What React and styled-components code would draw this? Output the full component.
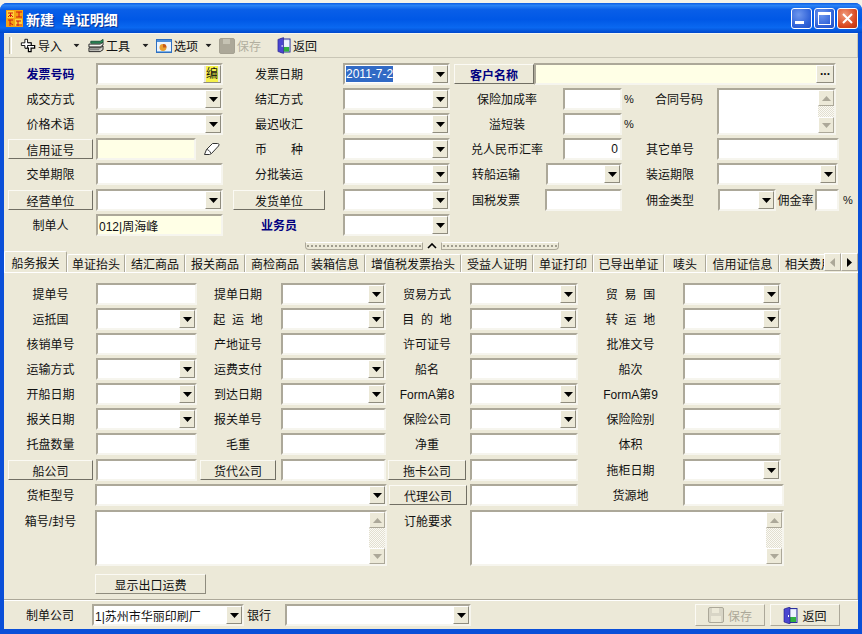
import React from "react";
import styled, { createGlobalStyle } from "styled-components";

const GlobalStyle = createGlobalStyle`
  html, body {
    margin: 0;
    padding: 0;
    background: #f4f2e8;
    overflow: hidden;
  }
  * {
    box-sizing: border-box;
  }
`;

const TOP_TABS = [
  { name: "单证抬头", w: 58 },
  { name: "结汇商品", w: 60 },
  { name: "报关商品", w: 60 },
  { name: "商检商品", w: 60 },
  { name: "装箱信息", w: 60 },
  { name: "增值税发票抬头", w: 96 },
  { name: "受益人证明", w: 72 },
  { name: "单证打印", w: 60 },
  { name: "已导出单证", w: 71 },
  { name: "唛头", w: 42 },
  { name: "信用证信息", w: 73 },
  { name: "相关费用", w: 60 }
];

const Arrow = ({ dir = "down", color = "#000" }) => {
  const points = {
    down: "0,0 9,0 4.5,5",
    up: "0,5 9,5 4.5,0",
    left: "5,0 5,9 0,4.5",
    right: "0,0 0,9 5,4.5"
  };
  const vertical = dir === "up" || dir === "down";
  return (
    <svg width={vertical ? 9 : 5} height={vertical ? 5 : 9}>
      <polygon points={points[dir]} fill={color} />
    </svg>
  );
};

const Combo = ({ w, ml, mt, children }) => (
  <Field $w={w} $ml={ml} $mt={mt}>
    <FieldText>{children}</FieldText>
    <DropButton>
      <Arrow />
    </DropButton>
  </Field>
);

const Memo = ({ w, h, ml }) => (
  <MemoBox $w={w} $h={h} $ml={ml}>
    <ScrollBar>
      <ScrollButton>
        <Arrow dir="up" color="#aca899" />
      </ScrollButton>
      <ScrollButton>
        <Arrow color="#aca899" />
      </ScrollButton>
    </ScrollBar>
  </MemoBox>
);

const LogoIcon = () => (
  <svg width="17" height="17" viewBox="0 0 17 17">
    <rect width="17" height="17" fill="#f5a214" />
    <rect x="1" y="1" width="7" height="7" fill="#ffd23c" />
    <rect x="9" y="9" width="7" height="7" fill="#ffd23c" />
    <path
      d="M2 3h5M4.500 3v4M2 7l2-2M7 7L5 5M10 2h6M13 2v5M10 7h6M2 10h5M4 10v6M4 13l3 2M10 11h5M12 11v5M10 15h6"
      stroke="#d01810"
      strokeWidth="1"
      fill="none"
    />
  </svg>
);

const ImportIcon = () => (
  <svg width="18" height="17" viewBox="0 0 18 17">
    <path
      d="M9.500 5.500h3v3h4v3h-4v4h-3v-4h-3v-3h3z"
      fill="#fff"
      stroke="#000"
      strokeWidth="1.400"
    />
    <path
      d="M5.500 1.500h3v4h4v3h-4v3h-3v-3h-4v-3h4z"
      fill="#fff"
      stroke="#000"
    />
  </svg>
);

const ToolsIcon = () => (
  <svg width="17" height="17" viewBox="0 0 17 17">
    <path d="M1 11h12l3-2v4l-3 2H1z" fill="#cfcfc8" stroke="#222" />
    <path d="M1 7h12l3-2v3l-3 2H1z" fill="#f4f4f0" stroke="#222" />
    <path d="M3 4h10l3-2v3l-3 1H3z" fill="#2f9a5c" stroke="#17503a" />
    <path d="M2 13h10" stroke="#666" />
  </svg>
);

const OptionsIcon = () => (
  <svg width="16" height="14" viewBox="0 0 16 14">
    <rect x="0.500" y="0.500" width="15" height="13" fill="#eef4fb" stroke="#2d6fc2" />
    <rect x="1" y="1" width="14" height="2" fill="#4d8ed8" />
    <circle cx="7" cy="8.500" r="3.500" fill="#e8a030" />
    <path d="M7 8.500V5a3.500 3.500 0 0 1 3.500 3.500z" fill="#c85a18" />
    <rect x="1" y="12" width="14" height="1" fill="#7db0e4" />
  </svg>
);

const SaveIcon = ({ light }) => (
  <svg width="16" height="16" viewBox="0 0 16 16">
    <rect
      x="0.500"
      y="0.500"
      width="15"
      height="15"
      rx="1.500"
      fill={light ? "#d8d5c6" : "#aca899"}
      stroke={light ? "#aca899" : "#a5a192"}
    />
    <rect x="4" y="1" width="7" height="5" fill={light ? "#ece9d8" : "#c6c3b4"} />
    <rect x="3" y="9" width="10" height="6" fill={light ? "#ece9d8" : "#aca899"} />
  </svg>
);

const DoorIcon = () => (
  <svg width="15" height="17" viewBox="0 0 15 17">
    <rect x="4" y="1.500" width="10" height="14" fill="#d4dcf4" stroke="#2a2f9c" />
    <rect x="7" y="10" width="6" height="5" fill="#30b040" />
    <rect x="7" y="3" width="6" height="7" fill="#eef3ff" />
    <path d="M1 2l6-2v17l-6-2z" fill="#4a46d0" stroke="#1d1a80" strokeWidth="0.600" />
    <rect x="5" y="8" width="1" height="2" fill="#fff" />
  </svg>
);

const EraserIcon = () => (
  <svg width="17" height="14" viewBox="0 0 17 14">
    <path
      d="M1.500 12.500l2-5 6-6h5c1.500 0 2 1 1 2.500l-7 7.500-2 1z"
      fill="#fff"
      stroke="#333"
    />
    <path d="M3.500 7.500c1.500 0 3 1 4.500 4" fill="none" stroke="#333" />
  </svg>
);

const App = () => (
  <>
    <GlobalStyle />
    <Window>
      <TitleBar>
        <LogoIcon />
        <TitleText>{"新建  单证明细"}</TitleText>
        <WindowButtons>
          <WindowButton>
            <MinGlyph />
          </WindowButton>
          <WindowButton>
            <MaxGlyph />
          </WindowButton>
          <WindowButton $close>
            <svg width="11" height="11">
              <path d="M1 1l9 9M10 1l-9 9" stroke="#fff" strokeWidth="2" />
            </svg>
          </WindowButton>
        </WindowButtons>
      </TitleBar>

      <Body>
        <Toolbar>
          <Grip />
          <ToolItem $ml={8} $w={42}>
            <ImportIcon />
            导入
          </ToolItem>
          <Caret $ml={10}>
            <Arrow color="#222" />
          </Caret>
          <ToolItem $ml={7} $w={42}>
            <ToolsIcon />
            工具
          </ToolItem>
          <Caret $ml={11}>
            <Arrow color="#222" />
          </Caret>
          <ToolItem $ml={6} $w={42}>
            <OptionsIcon />
            选项
          </ToolItem>
          <Caret $ml={6}>
            <Arrow color="#222" />
          </Caret>
          <ToolItem $ml={6} $w={42} $disabled>
            <SaveIcon />
            保存
          </ToolItem>
          <ToolItem $ml={16} $w={40}>
            <DoorIcon />
            返回
          </ToolItem>
        </Toolbar>

        <TopForm>
          <Row>
            <Label $w={85} $strong>发票号码</Label>
            <Field $w={127} $ml={3}>
              <FieldText />
              <CodeButton>
                <CodeMark>编</CodeMark>
              </CodeButton>
            </Field>
            <Label $w={92} $ml={10}>发票日期</Label>
            <Field $w={107} $ml={18}>
              <FieldText>
                <Selected>2011-7-2</Selected>
              </FieldText>
              <DropButton>
                <Arrow />
              </DropButton>
            </Field>
            <PushButton $w={80} $ml={4} $strong>客户名称</PushButton>
            <Field $w={302} $tint>
              <FieldText />
              <DotsButton>...</DotsButton>
            </Field>
          </Row>

          <RowGroup>
            <RowStack>
              <Row>
                <Label $w={85}>成交方式</Label>
                <Combo w={127} ml={3} />
                <Label $w={92} $ml={10}>结汇方式</Label>
                <Combo w={107} ml={18} />
                <Label $w={106} $ml={4}>保险加成率</Label>
                <Field $w={59} $ml={3} />
                <Unit $ml={2}>%</Unit>
                <Label $w={74} $ml={8}>合同号码</Label>
              </Row>
              <Row>
                <Label $w={85}>价格术语</Label>
                <Combo w={127} ml={3} />
                <Label $w={92} $ml={10}>最迟收汇</Label>
                <Combo w={107} ml={18} />
                <Label $w={106} $ml={4}>溢短装</Label>
                <Field $w={59} $ml={3} />
                <Unit $ml={2}>%</Unit>
              </Row>
            </RowStack>
            <Memo w={119} h={47} ml={3} />
          </RowGroup>

          <Row>
            <PushButton $w={85}>信用证号</PushButton>
            <Field $w={100} $ml={3} $tint />
            <IconSlot $ml={7}>
              <EraserIcon />
            </IconSlot>
            <Label $w={92} $ml={13}>币　　种</Label>
            <Combo w={107} ml={18} />
            <Label $w={106} $ml={4}>兑人民币汇率</Label>
            <Field $w={59} $ml={3} $right>
              <FieldText>0</FieldText>
            </Field>
            <Label $w={60} $ml={18}>其它单号</Label>
            <Field $w={122} $ml={17} />
          </Row>

          <Row>
            <Label $w={85}>交单期限</Label>
            <Field $w={127} $ml={3} />
            <Label $w={92} $ml={10}>分批装运</Label>
            <Combo w={107} ml={18} />
            <Label $w={84} $ml={4}>转船运输</Label>
            <Combo w={76} ml={8} />
            <Label $w={60} $ml={18}>装运期限</Label>
            <Combo w={121} ml={17} />
          </Row>

          <Row $mt={1}>
            <PushButton $w={85}>经营单位</PushButton>
            <Combo w={127} ml={3} />
            <PushButton $w={92} $ml={10}>发货单位</PushButton>
            <Combo w={107} ml={18} />
            <Label $w={84} $ml={4}>国税发票</Label>
            <Field $w={77} $ml={7} />
            <Label $w={60} $ml={18}>佣金类型</Label>
            <Combo w={58} ml={18} />
            <Label $w={37} $ml={1}>佣金率</Label>
            <Field $w={24} $ml={1} />
            <Unit $ml={4}>%</Unit>
          </Row>

          <Row>
            <Label $w={85}>制单人</Label>
            <Field $w={127} $ml={3} $tint>
              <FieldText>012|周海峰</FieldText>
            </Field>
            <Label $w={92} $ml={10} $strong>业务员</Label>
            <Combo w={107} ml={18} />
          </Row>
        </TopForm>

        <Splitter>
          <GripBar />
          <SplitCaret>
            <svg width="10" height="6">
              <path d="M1 5l4-4 4 4" stroke="#000" strokeWidth="1.600" fill="none" />
            </svg>
          </SplitCaret>
          <GripBar $flip />
        </Splitter>

        <TabBar>
          <TabList>
            <Tab $w={63} $active>船务报关</Tab>
            {TOP_TABS.map(tab => (
              <Tab key={tab.name} $w={tab.w}>
                {tab.name}
              </Tab>
            ))}
          </TabList>
          <TabScroll>
            <Arrow dir="left" color="#aca899" />
          </TabScroll>
          <TabScroll>
            <Arrow dir="right" />
          </TabScroll>
        </TabBar>

        <Page>
          <Row>
            <Label $w={85}>提单号</Label>
            <Field $w={101} $ml={3} />
            <Label $w={76} $ml={3}>提单日期</Label>
            <Combo w={105} ml={5} />
            <Label $w={78} $ml={2}>贸易方式</Label>
            <Combo w={108} ml={4} />
            <Label $w={105}>{"贸  易  国"}</Label>
            <Combo w={98} />
          </Row>
          <Row>
            <Label $w={85}>运抵国</Label>
            <Combo w={101} ml={3} />
            <Label $w={76} $ml={3}>{"起  运  地"}</Label>
            <Combo w={105} ml={5} />
            <Label $w={78} $ml={2}>{"目  的  地"}</Label>
            <Combo w={108} ml={4} />
            <Label $w={105}>{"转  运  地"}</Label>
            <Combo w={98} />
          </Row>
          <Row>
            <Label $w={85}>核销单号</Label>
            <Field $w={101} $ml={3} />
            <Label $w={76} $ml={3}>产地证号</Label>
            <Field $w={105} $ml={5} />
            <Label $w={78} $ml={2}>许可证号</Label>
            <Field $w={108} $ml={4} />
            <Label $w={105}>批准文号</Label>
            <Field $w={98} />
          </Row>
          <Row>
            <Label $w={85}>运输方式</Label>
            <Combo w={101} ml={3} />
            <Label $w={76} $ml={3}>运费支付</Label>
            <Combo w={105} ml={5} />
            <Label $w={78} $ml={2}>船名</Label>
            <Field $w={108} $ml={4} />
            <Label $w={105}>船次</Label>
            <Field $w={98} />
          </Row>
          <Row>
            <Label $w={85}>开船日期</Label>
            <Combo w={101} ml={3} />
            <Label $w={76} $ml={3}>到达日期</Label>
            <Combo w={105} ml={5} />
            <Label $w={78} $ml={2}>FormA第8</Label>
            <Combo w={108} ml={4} />
            <Label $w={105}>FormA第9</Label>
            <Field $w={98} />
          </Row>
          <Row>
            <Label $w={85}>报关日期</Label>
            <Combo w={101} ml={3} />
            <Label $w={76} $ml={3}>报关单号</Label>
            <Field $w={105} $ml={5} />
            <Label $w={78} $ml={2}>保险公司</Label>
            <Combo w={108} ml={4} />
            <Label $w={105}>保险险别</Label>
            <Field $w={98} />
          </Row>
          <Row $h={26}>
            <Label $w={85}>托盘数量</Label>
            <Field $w={101} $ml={3} />
            <Label $w={76} $ml={3}>毛重</Label>
            <Field $w={105} $ml={5} />
            <Label $w={78} $ml={2}>净重</Label>
            <Field $w={108} $ml={4} />
            <Label $w={105}>体积</Label>
            <Field $w={98} />
          </Row>
          <Row>
            <PushButton $w={85}>船公司</PushButton>
            <Field $w={101} $ml={3} />
            <PushButton $w={76} $ml={3}>货代公司</PushButton>
            <Field $w={105} $ml={5} />
            <PushButton $w={78} $ml={2}>拖卡公司</PushButton>
            <Field $w={108} $ml={4} />
            <Label $w={105}>拖柜日期</Label>
            <Combo w={98} />
          </Row>
          <Row $h={26}>
            <Label $w={85}>货柜型号</Label>
            <Combo w={292} ml={2} />
            <PushButton $w={78} $ml={2}>代理公司</PushButton>
            <Field $w={108} $ml={3} />
            <Label $w={105}>货源地</Label>
            <Field $w={101} />
          </Row>
          <MemoRow>
            <Label $w={85}>箱号/封号</Label>
            <Memo w={292} h={56} ml={2} />
            <Label $w={78} $ml={2}>订舱要求</Label>
            <Memo w={314} h={56} ml={3} />
          </MemoRow>
          <FreightButton>显示出口运费</FreightButton>
        </Page>

        <Footer>
          <Label $w={84}>制单公司</Label>
          <Combo w={152}>1|苏州市华丽印刷厂</Combo>
          <Label $w={24} $ml={3}>银行</Label>
          <Combo w={186} ml={14} />
          <FooterButton $ml={224} $disabled>
            <SaveIcon light />
            保存
          </FooterButton>
          <FooterButton $ml={5}>
            <DoorIcon />
            返回
          </FooterButton>
        </Footer>
      </Body>
    </Window>
  </>
);

const Window = styled.div`
  width: 862px;
  height: 631px;
  margin-top: 3px;
  display: flex;
  flex-direction: column;
  background: #0a4fd8;
  border-radius: 7px 7px 0 0;
  overflow: hidden;
  font-family: "Liberation Sans", "Noto Sans CJK SC", sans-serif;
  font-size: 12px;
  color: #111;
`;

const TitleBar = styled.div`
  height: 30px;
  flex: none;
  display: flex;
  align-items: center;
  padding: 1px 4px 0 6px;
  background: linear-gradient(
    to bottom,
    #0a5be2 0%,
    #2a83f5 8%,
    #0a5fe8 22%,
    #0058e6 55%,
    #0a68f0 82%,
    #0048cc 100%
  );
`;

const TitleText = styled.div`
  margin-left: 3px;
  color: #fff;
  font-size: 14px;
  font-weight: 700;
  white-space: pre;
  text-shadow: 1px 1px 1px #0a2f90;
`;

const WindowButtons = styled.div`
  margin-left: auto;
  display: flex;
  gap: 2px;
`;

const WindowButton = styled.div`
  width: 21px;
  height: 21px;
  display: flex;
  align-items: center;
  justify-content: center;
  border: 1px solid #fff;
  border-radius: 3px;
  background: ${props =>
    props.$close
      ? "radial-gradient(circle at 35% 30%, #f09a7a, #d9461e 65%, #b83412)"
      : "radial-gradient(circle at 35% 30%, #6e97ee, #2f62d8 65%, #2450c4)"};
`;

const MinGlyph = styled.div`
  width: 9px;
  height: 3px;
  margin: 8px 5px 0 0;
  background: #fff;
`;

const MaxGlyph = styled.div`
  width: 13px;
  height: 13px;
  border: 1px solid #fff;
  border-top-width: 3px;
`;

const Body = styled.div`
  flex: 1;
  margin: 0 4px 5px 4px;
  min-height: 0;
  display: flex;
  flex-direction: column;
  background: #ece9d8;
`;

const Toolbar = styled.div`
  height: 25px;
  flex: none;
  display: flex;
  align-items: center;
  padding-left: 5px;
  border-top: 1px solid #f8f7f0;
  border-bottom: 1px solid #c9c6b6;
  border-right: 1px solid #c9c6b6;
`;

const Grip = styled.div`
  width: 3px;
  height: 17px;
  border-left: 1px solid #aca899;
  border-right: 1px solid #fff;
`;

const ToolItem = styled.div`
  width: ${props => props.$w}px;
  margin-left: ${props => props.$ml}px;
  display: flex;
  align-items: center;
  gap: 2px;
  flex: none;
  white-space: nowrap;
  color: ${props => (props.$disabled ? "#b2afa0" : "#111")};
`;

const Caret = styled.div`
  margin-left: ${props => props.$ml}px;
  display: flex;
  transform: scale(0.7);
`;

const TopForm = styled.div`
  flex: none;
  padding: 5px 0 0 4px;
`;

const Row = styled.div`
  height: ${props => props.$h || 25}px;
  margin-top: ${props => props.$mt || 0}px;
  display: flex;
  align-items: flex-start;
`;

const RowGroup = styled.div`
  display: flex;
  align-items: flex-start;
`;

const RowStack = styled.div`
  width: 706px;
  flex: none;
`;

const Label = styled.div`
  width: ${props => props.$w}px;
  margin-left: ${props => props.$ml || 0}px;
  height: 22px;
  padding-bottom: 2px;
  flex: none;
  display: flex;
  align-items: center;
  justify-content: center;
  white-space: pre;
  font-weight: ${props => (props.$strong ? 700 : 400)};
  color: ${props => (props.$strong ? "#000080" : "#111")};
`;

const Field = styled.div`
  width: ${props => props.$w}px;
  margin-left: ${props => props.$ml || 0}px;
  height: 22px;
  flex: none;
  display: flex;
  align-items: stretch;
  justify-content: ${props => (props.$right ? "flex-end" : "flex-start")};
  background: ${props => (props.$tint ? "#ffffe6" : "#fff")};
  border: 2px solid;
  border-color: #aca899 #f6f5ee #f6f5ee #aca899;
`;

const FieldText = styled.div`
  flex: 1;
  min-width: 0;
  padding: 0 2px 0 1px;
  display: flex;
  align-items: center;
  justify-content: inherit;
  white-space: nowrap;
  overflow: hidden;
`;

const Selected = styled.span`
  background: #316ac5;
  color: #fff;
  line-height: 16px;
`;

const DropButton = styled.div`
  width: 16px;
  flex: none;
  display: flex;
  align-items: center;
  justify-content: center;
  background: #ece9d8;
  border: 1px solid;
  border-color: #fff #8f8c7e #8f8c7e #fff;
`;

const CodeButton = styled(DropButton)`
  width: 18px;
`;

const CodeMark = styled.span`
  background: #f6f24a;
  line-height: 16px;
`;

const DotsButton = styled(DropButton)`
  width: 18px;
  font-weight: 700;
  padding-bottom: 6px;
`;

const PushButton = styled.div`
  width: ${props => props.$w}px;
  margin: 1px 0 0 ${props => props.$ml || 0}px;
  height: 20px;
  flex: none;
  display: flex;
  align-items: center;
  justify-content: center;
  background: #ece9d8;
  border: 1px solid;
  border-color: #fbfaf4 #716f64 #716f64 #fbfaf4;
  font-weight: ${props => (props.$strong ? 700 : 400)};
  color: ${props => (props.$strong ? "#000080" : "#111")};
`;

const Unit = styled.div`
  margin-left: ${props => props.$ml}px;
  width: 10px;
  height: 22px;
  flex: none;
  display: flex;
  align-items: center;
  font-size: 11px;
`;

const IconSlot = styled.div`
  margin-left: ${props => props.$ml}px;
  width: 17px;
  height: 22px;
  flex: none;
  display: flex;
  align-items: center;
`;

const MemoBox = styled.div`
  width: ${props => props.$w}px;
  height: ${props => props.$h}px;
  margin-left: ${props => props.$ml}px;
  flex: none;
  display: flex;
  justify-content: flex-end;
  background: #fff;
  border: 2px solid;
  border-color: #aca899 #f6f5ee #f6f5ee #aca899;
`;

const ScrollBar = styled.div`
  width: 16px;
  display: flex;
  flex-direction: column;
  justify-content: space-between;
  background: repeating-conic-gradient(#fbfaf5 0% 25%, #e2dfd0 0% 50%) 0 0 / 2px 2px;
`;

const ScrollButton = styled.div`
  height: 16px;
  flex: none;
  display: flex;
  align-items: center;
  justify-content: center;
  background: #ece9d8;
  border: 1px solid;
  border-color: #fff #aca899 #aca899 #fff;
`;

const Splitter = styled.div`
  height: 10px;
  margin-top: 2px;
  flex: none;
  display: flex;
  justify-content: center;
  align-items: center;
  padding-left: 2px;
`;

const GripBar = styled.div`
  width: 118px;
  height: 8px;
  border: 1px solid #aca899;
  border-top-color: #fff;
  border-radius: ${props => (props.$flip ? "0 0 4px 0" : "0 0 0 4px")};
  background:
    radial-gradient(circle, #a09d8e 0.8px, transparent 1px) 0 0 / 4px 6px
    repeat-x;
`;

const SplitCaret = styled.div`
  width: 18px;
  height: 10px;
  display: flex;
  align-items: center;
  justify-content: center;
`;

const TabBar = styled.div`
  height: 22px;
  flex: none;
  display: flex;
  align-items: flex-end;
  border-bottom: 1px solid #fff;
`;

const TabList = styled.div`
  width: 820px;
  flex: none;
  display: flex;
  align-items: flex-end;
  overflow: hidden;
  height: 21px;
`;

const Tab = styled.div`
  width: ${props => props.$w}px;
  height: ${props => (props.$active ? 21 : 18)}px;
  flex: none;
  display: flex;
  align-items: center;
  justify-content: center;
  white-space: nowrap;
  background: #ece9d8;
  border-top: 1px solid #fff;
  border-left: 1px solid #fff;
  border-right: 1px solid #aca899;
  border-radius: 2px 2px 0 0;
  overflow: hidden;
`;

const TabScroll = styled.div`
  width: 17px;
  height: 18px;
  margin-bottom: 1px;
  flex: none;
  display: flex;
  align-items: center;
  justify-content: center;
  background: #ece9d8;
  border: 1px solid;
  border-color: #fff #aca899 #aca899 #fff;
`;

const Page = styled.div`
  flex: 1;
  min-height: 0;
  padding: 10px 0 0 4px;
  border-right: 1px solid #c9c6b6;
`;

const MemoRow = styled.div`
  display: flex;
  align-items: flex-start;
`;

const FreightButton = styled.div`
  width: 111px;
  height: 20px;
  margin: 8px 0 0 87px;
  display: flex;
  align-items: center;
  justify-content: center;
  background: #ece9d8;
  border: 1px solid;
  border-color: #fbfaf4 #8f8c7e #8f8c7e #fbfaf4;
`;

const Footer = styled.div`
  height: 30px;
  flex: none;
  display: flex;
  align-items: flex-start;
  padding: 4px 0 0 4px;
  border-top: 1px solid #aca899;
  box-shadow: inset 0 1px 0 #fff;
`;

const FooterButton = styled.div`
  width: 70px;
  height: 22px;
  margin-left: ${props => props.$ml}px;
  flex: none;
  display: flex;
  align-items: center;
  justify-content: center;
  gap: 4px;
  background: #ece9d8;
  border: 1px solid;
  border-color: #fbfaf4 #aca899 #aca899 #fbfaf4;
  color: ${props => (props.$disabled ? "#aca899" : "#111")};
`;

export default App;
